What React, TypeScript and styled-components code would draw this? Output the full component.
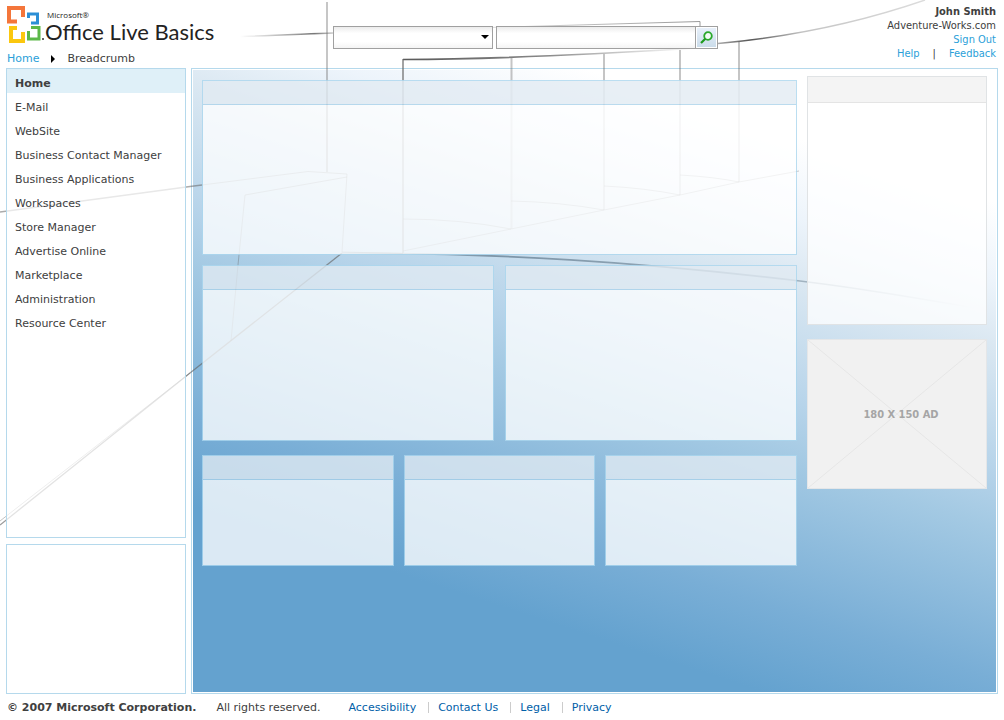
import React from 'react';
import styled, { createGlobalStyle } from 'styled-components';

const GlobalStyle = createGlobalStyle`
  * { box-sizing: border-box; }
  body {
    margin: 0;
    background: #fff;
    color: #404040;
    font-family: 'DejaVu Sans', Verdana, sans-serif;
    font-size: 11px;
  }
`;

const Page = styled.div`
  position: relative;
  display: flex;
  flex-direction: column;
  min-height: 100vh;
  padding: 0 6px;
  overflow: hidden;
`;

const Sketch = styled.svg`
  position: absolute;
  top: 0;
  left: 0;
  pointer-events: none;
`;

const Header = styled.header`
  position: relative;
  z-index: 1;
  display: flex;
  height: 68px;
`;

const Brand = styled.div`
  display: flex;
  flex-direction: column;
  justify-content: space-between;
  width: 327px;
  padding: 6px 0 2px 1px;
`;

const Logo = styled.div`
  display: flex;
  gap: 3px;
  height: 38px;
  svg {
    overflow: visible;
  }
`;

const LogoText = styled.div`
  display: flex;
  flex-direction: column;
  color: #222;
  white-space: nowrap;
`;

const Maker = styled.span`
  padding: 4px 0 0 2px;
  font-family: 'Open Sans', sans-serif;
  font-size: 8px;
  line-height: 10px;
`;

const Product = styled.span`
  font-family: Lato, sans-serif;
  font-size: 22px;
  line-height: 24px;
`;

const Breadcrumb = styled.nav`
  display: flex;
  align-items: center;
  gap: 10px;
  line-height: 14px;
`;

const Link = styled.a`
  color: #2b9fd9;
  text-decoration: none;
`;

const Search = styled.form`
  display: flex;
  gap: 3px;
  height: 23px;
  margin-top: 26px;
`;

const Scope = styled.div`
  position: relative;
  width: 160px;
  svg {
    position: absolute;
    top: 9px;
    right: 4px;
    pointer-events: none;
  }
`;

const fieldLook = `
  height: 100%;
  border: 1px solid #a0a0a0;
  border-radius: 0;
  background: linear-gradient(#ececec, #fff 30%, #fff 70%, #f4f4f4);
  font: inherit;
  outline: none;
`;

const Select = styled.select`
  ${fieldLook}
  width: 100%;
  appearance: none;
`;

const SearchBox = styled.div`
  display: flex;
`;

const Input = styled.input`
  ${fieldLook}
  width: 200px;
  padding: 0 4px;
`;

const SearchButton = styled.button`
  display: flex;
  align-items: center;
  justify-content: center;
  width: 22px;
  height: 23px;
  padding: 0;
  border: 1px solid #a0a0a0;
  border-width: 1px 1px 1px 0;
  background: linear-gradient(#e9f1fb, #c9dbe9);
  box-shadow: inset 0 0 0 1px #fff;
`;

const Account = styled.div`
  display: flex;
  flex-direction: column;
  align-items: flex-end;
  margin-left: auto;
  padding: 5px 2px 0 0;
  font-family: 'DejaVu Sans Condensed', Tahoma, sans-serif;
  line-height: 14px;
`;

const AccountLinks = styled.div`
  display: flex;
  gap: 13px;
`;

const Columns = styled.div`
  display: flex;
  gap: 5px;
  flex: 1;
  min-height: 626px;
`;

const Sidebar = styled.aside`
  position: relative;
  z-index: 1;
  display: flex;
  flex-direction: column;
  gap: 6px;
  width: 180px;
`;

const SideBox = styled.div<{ $grow?: boolean }>`
  flex: ${p => (p.$grow ? '1' : '0 0 150px')};
  border: 1px solid #b5d9ec;
  background: rgba(255, 255, 255, 0.72);
`;

const NavItem = styled.a<{ $active?: boolean }>`
  display: block;
  height: 24px;
  padding: 2px 8px 0;
  line-height: 26px;
  color: #404040;
  text-decoration: none;
  background: ${p => (p.$active ? '#dff0f8' : 'transparent')};
  font-weight: ${p => (p.$active ? 'bold' : 'normal')};
`;

const Main = styled.main`
  display: flex;
  flex: 1;
  border: 1px solid #b5d9ec;
  padding: 1px;
`;

const Workspace = styled.div`
  display: flex;
  gap: 10px;
  flex: 1;
  padding: 6px 9px;
  background: linear-gradient(
    198deg,
    #fff 15%,
    #edf4fb 24%,
    #dbe8f2 31%,
    #b7d4ea 45%,
    #a3c9e3 52%,
    #79aed6 69%,
    #64a2cf 79%
  );
`;

const Parts = styled.div`
  position: relative;
  z-index: 1;
  display: flex;
  flex: 1;
  flex-direction: column;
  padding-top: 4px;
`;

const Row = styled.div<{ $columns: number; $gap: number; $below: number }>`
  display: grid;
  grid-template-columns: repeat(${p => p.$columns}, 1fr);
  gap: ${p => p.$gap}px;
  margin-bottom: ${p => p.$below}px;
`;

const Panel = styled.section<{ $height: number }>`
  display: flex;
  flex-direction: column;
  height: ${p => p.$height}px;
  border: 1px solid rgba(170, 214, 238, 0.8);
`;

const PanelHead = styled.div`
  height: 24px;
  border-bottom: 1px solid rgba(170, 210, 234, 0.8);
  background: rgba(226, 235, 242, 0.78);
  background-clip: padding-box;
`;

const PanelBody = styled.div`
  flex: 1;
  background: rgba(255, 255, 255, 0.77);
`;

const Rail = styled.aside`
  position: relative;
  z-index: 1;
  display: flex;
  flex-direction: column;
  gap: 14px;
  width: 180px;
`;

const RailPanel = styled.section`
  display: flex;
  flex-direction: column;
  height: 249px;
  border: 1px solid #e0e3e5;
`;

const RailHead = styled.div`
  height: 26px;
  border-bottom: 1px solid #e4e4e4;
  background: #f4f4f4;
`;

const Ad = styled.div`
  position: relative;
  display: flex;
  align-items: center;
  justify-content: center;
  height: 150px;
  padding-left: 8px;
  border: 1px solid #e4e6e8;
  background: #f1f1f1;
  color: #a5a5a5;
  font-family: 'DejaVu Sans Condensed', Tahoma, sans-serif;
  font-weight: bold;
  svg {
    position: absolute;
    inset: 0;
    width: 100%;
    height: 100%;
  }
  span {
    position: relative;
  }
`;

const Footer = styled.footer`
  position: relative;
  z-index: 1;
  display: flex;
  align-items: center;
  gap: 20px;
  height: 26px;
  padding-left: 1px;
  white-space: nowrap;
`;

const FooterLinks = styled.nav`
  display: flex;
  margin-left: 8px;
`;

const FooterLink = styled.a`
  color: #0060a8;
  text-decoration: none;
  line-height: 11px;
  & + & {
    margin-left: 12px;
    padding-left: 9px;
    border-left: 1px solid #ccc;
  }
`;

const navItems = [
  'Home',
  'E-Mail',
  'WebSite',
  'Business Contact Manager',
  'Business Applications',
  'Workspaces',
  'Store Manager',
  'Advertise Online',
  'Marketplace',
  'Administration',
  'Resource Center',
];

const partRows = [
  { columns: 1, gap: 0, height: 175, below: 10 },
  { columns: 2, gap: 11, height: 176, below: 14 },
  { columns: 3, gap: 10, height: 111, below: 0 },
];

const BackgroundSketch = () => (
  <Sketch width="1004" height="720" viewBox="0 0 1004 720" fill="none" aria-hidden="true">
    <defs>
      <linearGradient id="fadeIn" gradientUnits="userSpaceOnUse" x1="240" y1="0" x2="333" y2="0">
        <stop offset="0" stopColor="#888" stopOpacity="0" />
        <stop offset="0.8" stopColor="#777" />
        <stop offset="1" stopColor="#ccc" />
      </linearGradient>
      <linearGradient id="beam" gradientUnits="userSpaceOnUse" x1="403" y1="0" x2="690" y2="0">
        <stop offset="0" stopColor="#5a5a5a" />
        <stop offset="0.5" stopColor="#888" />
        <stop offset="1" stopColor="#aaa" stopOpacity="0.1" />
      </linearGradient>
      <linearGradient id="sweep" gradientUnits="userSpaceOnUse" x1="718" y1="0" x2="930" y2="0">
        <stop offset="0" stopColor="#aaa" />
        <stop offset="0.15" stopColor="#555" />
        <stop offset="0.4" stopColor="#c4c4c4" />
        <stop offset="1" stopColor="#ddd" />
      </linearGradient>
      <linearGradient id="roof" gradientUnits="userSpaceOnUse" x1="490" y1="0" x2="700" y2="0">
        <stop offset="0" stopColor="#ddd" />
        <stop offset="1" stopColor="#999" />
      </linearGradient>
      <linearGradient id="floor" gradientUnits="userSpaceOnUse" x1="342" y1="0" x2="975" y2="0">
        <stop offset="0" stopColor="#4c6578" stopOpacity="0.3" />
        <stop offset="0.25" stopColor="#4c6578" stopOpacity="0.6" />
        <stop offset="0.75" stopColor="#4c6578" stopOpacity="0.4" />
        <stop offset="1" stopColor="#4c6578" stopOpacity="0" />
      </linearGradient>
    </defs>
    <path d="M240 36.5C275 35.5 305 34 333 33" stroke="url(#fadeIn)" strokeWidth="1.6" />
    <path d="M327 2V172" stroke="#777" strokeOpacity="0.42" strokeWidth="2" />
    <path d="M490 27.5L700 21.5V26" stroke="url(#roof)" />
    <path d="M403 59.5C500 59 600 54 690 48.5" stroke="url(#beam)" strokeWidth="1.7" />
    <path d="M718 43.5C800 36 870 19 925 0" stroke="url(#sweep)" strokeWidth="1.4" />
    <g stroke="#666">
      <path d="M403 59V80" strokeWidth="2" strokeOpacity="0.6" />
      <path d="M403 80V253" strokeWidth="2" strokeOpacity="0.35" />
      <path d="M511.5 58V80M604 54V80M680 50V80M739 41V80" strokeWidth="2" strokeOpacity="0.38" />
      <path d="M511.5 80V229M604 80V210M680 80V195M739 80V182" strokeWidth="2" strokeOpacity="0.2" />
      <path
        d="M403 251L511 229L604 210L680 195L739 182L799 171M403 219Q460 219 511 229M511 201Q560 202 604 210M604 186Q645 188 680 195M680 175Q715 177 739 182"
        strokeOpacity="0.32"
      />
      <path
        d="M202 185L308 171.500L347 174L342 252L403 253.500M347 177L245 195L238 265L231 341"
        strokeOpacity="0.38"
      />
      <path d="M0 212L190 186.500L202 185" strokeOpacity="0.55" strokeWidth="1.3" />
      <path d="M342 253L190 373L0 525" strokeOpacity="0.65" strokeWidth="1.3" />
      <path d="M190 373L0 521" strokeOpacity="0.4" />
    </g>
    <path d="M342 253C500 253 640 262 800 281C860 288 910 297 975 308" stroke="url(#floor)" strokeWidth="1.6" />
  </Sketch>
);

const OfficeMark = () => (
  <svg width="35" height="38" viewBox="0 0 35 38" fill="none" strokeWidth="4" aria-hidden="true">
    <path d="M10 15.500H2V2H16V11" stroke="#f4763b" />
    <path d="M21.500 12V8H30.500V17H24" stroke="#2c8fd6" strokeWidth="3" />
    <path d="M10 22H4V35H16V26" stroke="#fbc70f" />
    <path d="M21.500 25V33H32V21.500H24" stroke="#5cb849" strokeWidth="3" />
    <circle cx="36" cy="33" r="1" fill="#333" />
  </svg>
);

export default function App() {
  return (
    <Page>
      <GlobalStyle />
      <BackgroundSketch />
      <Header>
        <Brand>
          <Logo>
            <OfficeMark />
            <LogoText>
              <Maker>Microsoft®</Maker>
              <Product>Office Live Basics</Product>
            </LogoText>
          </Logo>
          <Breadcrumb aria-label="Breadcrumb">
            <Link href="#home">Home</Link>
            <svg width="8" height="8" viewBox="0 0 8 8" aria-hidden="true">
              <path d="M2 0L6 4L2 8Z" fill="#000" />
            </svg>
            <span>Breadcrumb</span>
          </Breadcrumb>
        </Brand>
        <Search onSubmit={e => e.preventDefault()}>
          <Scope>
            <Select aria-label="Search scope" />
            <svg width="8" height="4" viewBox="0 0 8 4" aria-hidden="true">
              <path d="M0 0H8L4 4Z" fill="#000" />
            </svg>
          </Scope>
          <SearchBox>
            <Input type="text" aria-label="Search text" />
            <SearchButton type="submit" aria-label="Search">
              <svg width="13" height="13" viewBox="0 0 13 13" fill="none" aria-hidden="true">
                <circle cx="8" cy="5" r="3.800" stroke="#2aa82a" strokeWidth="1.800" fill="#f2fbf4" />
                <path d="M5.300 7.700L1 12" stroke="#1d9a1d" strokeWidth="2.200" />
              </svg>
            </SearchButton>
          </SearchBox>
        </Search>
        <Account>
          <strong>John Smith</strong>
          <span>Adventure-Works.com</span>
          <Link href="#sign-out">Sign Out</Link>
          <AccountLinks>
            <Link href="#help">Help</Link>
            <span>|</span>
            <Link href="#feedback">Feedback</Link>
          </AccountLinks>
        </Account>
      </Header>
      <Columns>
        <Sidebar>
          <SideBox as="nav" $grow>
            {navItems.map((item, i) => (
              <NavItem key={item} href="#" $active={i === 0}>
                {item}
              </NavItem>
            ))}
          </SideBox>
          <SideBox />
        </Sidebar>
        <Main>
          <Workspace>
            <Parts>
              {partRows.map(row => (
                <Row key={row.columns} $columns={row.columns} $gap={row.gap} $below={row.below}>
                  {Array.from({ length: row.columns }, (_, i) => (
                    <Panel key={i} $height={row.height}>
                      <PanelHead />
                      <PanelBody />
                    </Panel>
                  ))}
                </Row>
              ))}
            </Parts>
            <Rail>
              <RailPanel>
                <RailHead />
                <PanelBody />
              </RailPanel>
              <Ad>
                <svg viewBox="0 0 178 148" preserveAspectRatio="none" aria-hidden="true">
                  <path d="M0 0L178 148M178 0L0 148" stroke="#e6e6e6" />
                </svg>
                <span>180 X 150 AD</span>
              </Ad>
            </Rail>
          </Workspace>
        </Main>
      </Columns>
      <Footer>
        <strong>© 2007 Microsoft Corporation.</strong>
        <span>All rights reserved.</span>
        <FooterLinks>
          <FooterLink href="#accessibility">Accessibility</FooterLink>
          <FooterLink href="#contact">Contact Us</FooterLink>
          <FooterLink href="#legal">Legal</FooterLink>
          <FooterLink href="#privacy">Privacy</FooterLink>
        </FooterLinks>
      </Footer>
    </Page>
  );
}
